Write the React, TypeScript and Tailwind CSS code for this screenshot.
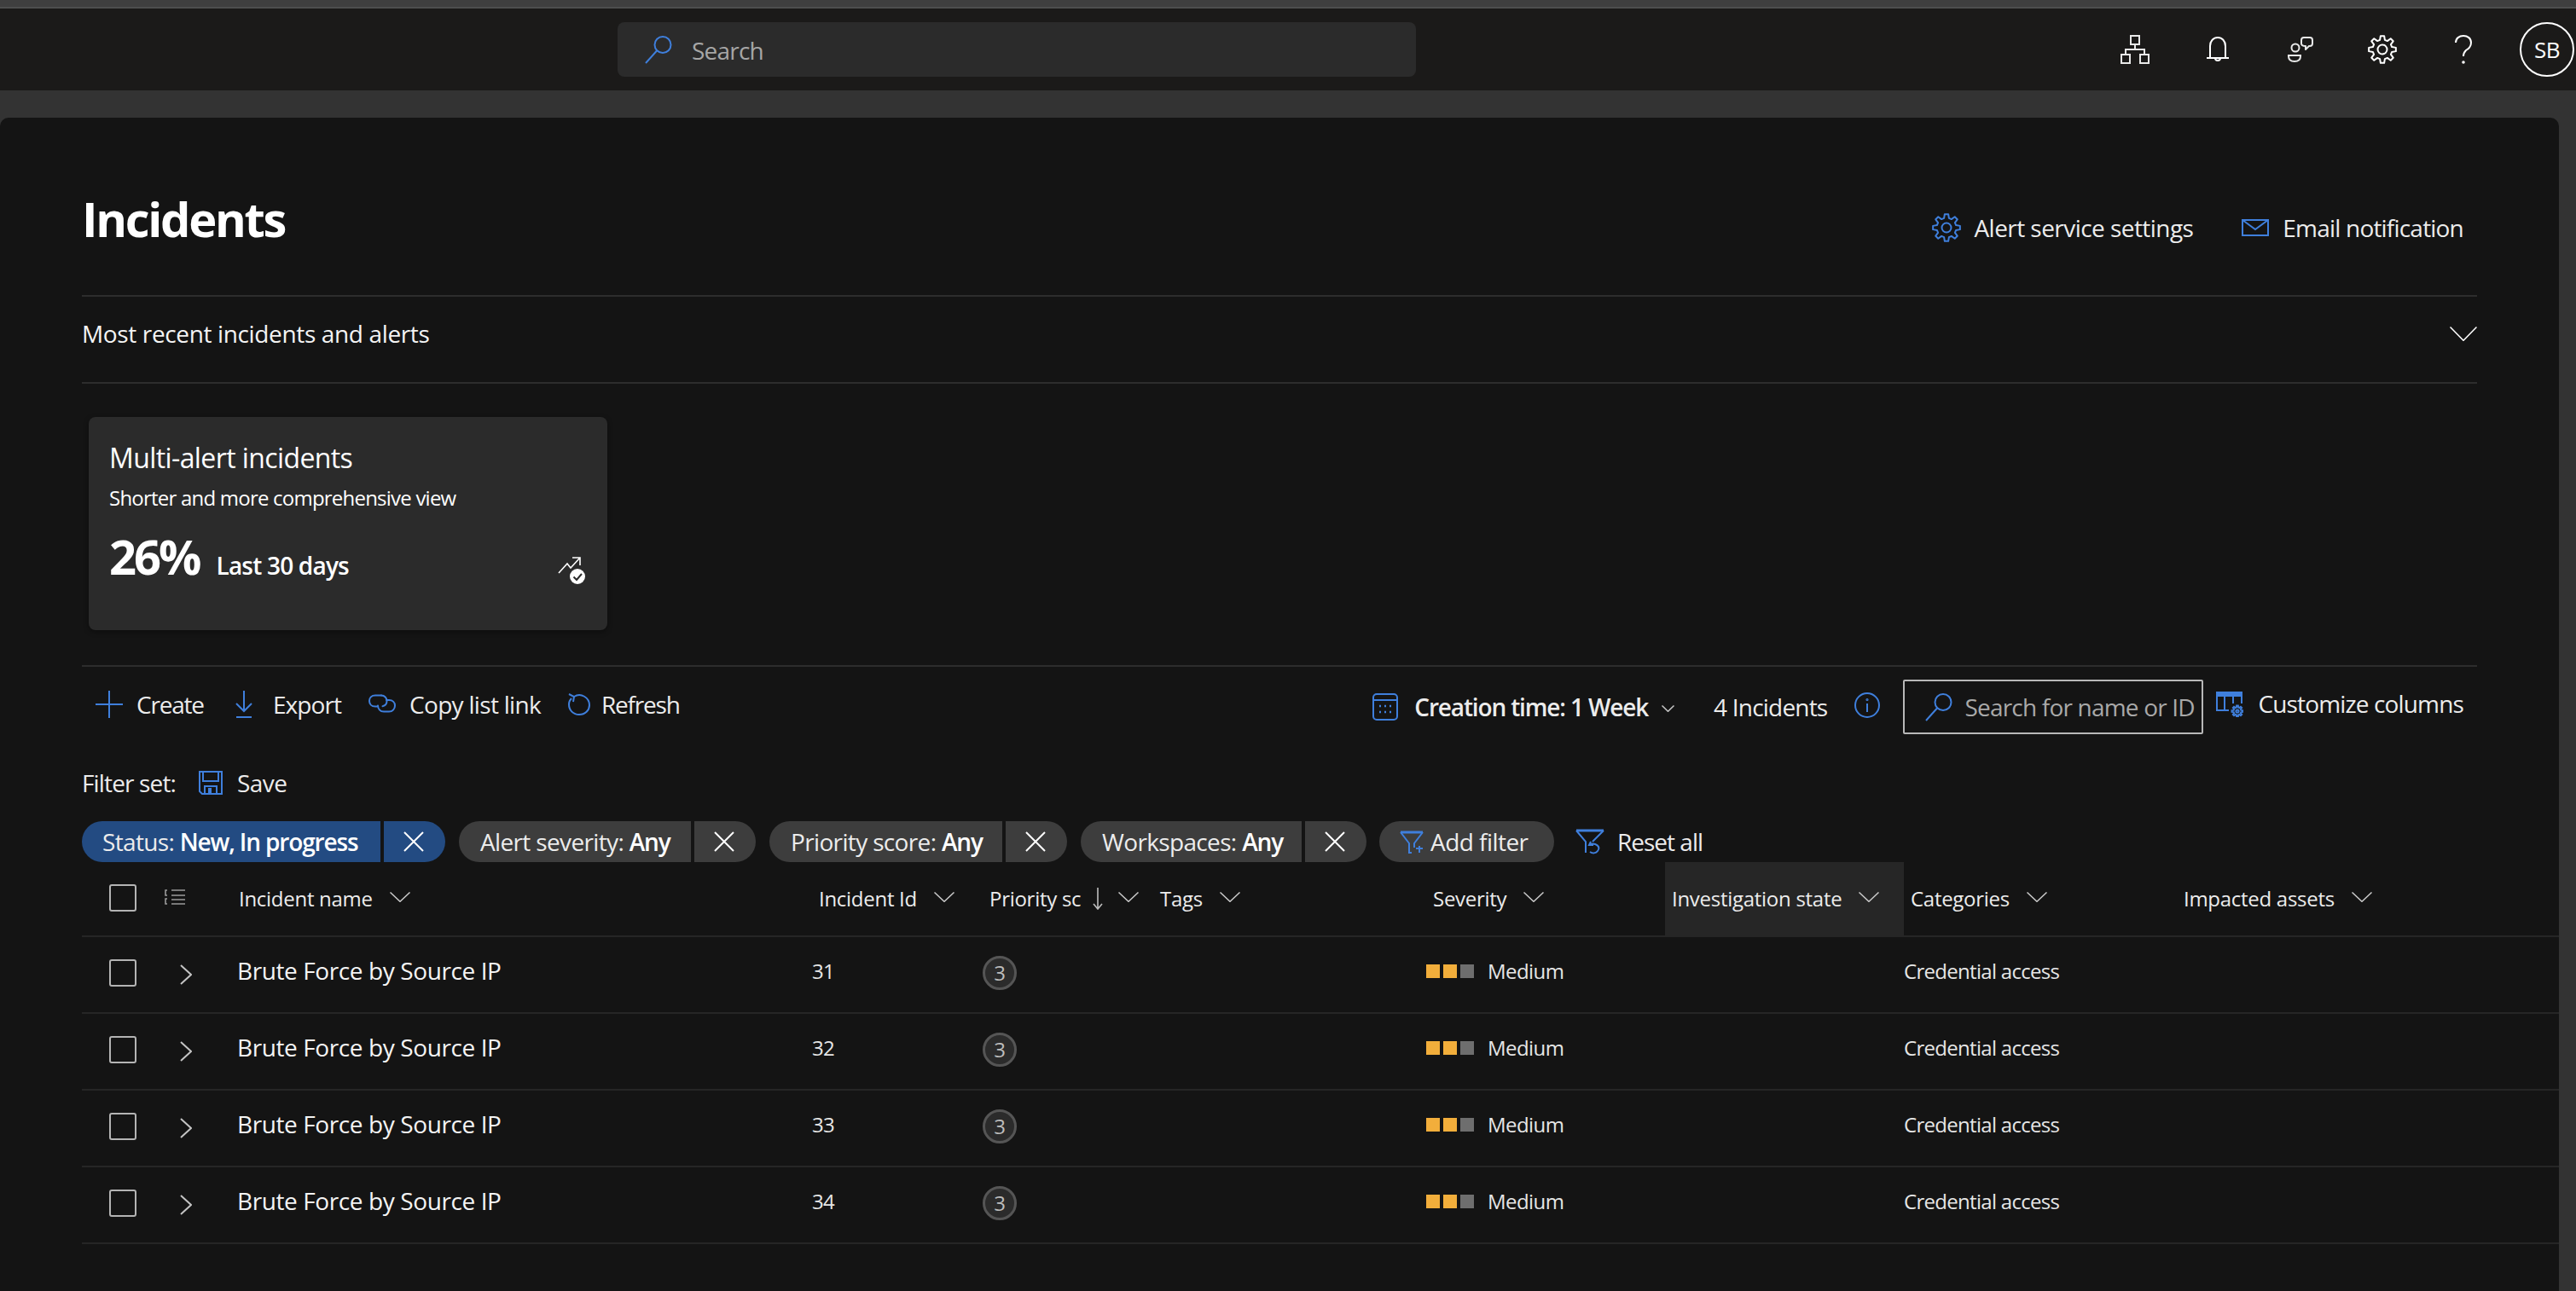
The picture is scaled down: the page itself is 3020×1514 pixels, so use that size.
import React from "react";

const BLUE = "#3f7fdc";

function gearPath(cx: number, cy: number, ro: number, ri: number, n = 8) {
  let d = "";
  const step = (Math.PI * 2) / n;
  for (let i = 0; i < n; i++) {
    const a = i * step - Math.PI / 2;
    const w = step * 0.17;
    const pts: [number, number][] = [
      [ri, a - w * 1.9],
      [ro, a - w],
      [ro, a + w],
      [ri, a + w * 1.9],
    ];
    pts.forEach(([r, t], j) => {
      const x = (cx + r * Math.cos(t)).toFixed(2);
      const y = (cy + r * Math.sin(t)).toFixed(2);
      d += (i === 0 && j === 0 ? "M" : "L") + x + " " + y + " ";
    });
  }
  return d + "Z";
}

type IP = { c?: string; w?: number; h?: number; s?: number };
const Ico = ({ w = 32, h = 32, c = BLUE, s = 2, vb, children }: IP & { vb?: string; children: React.ReactNode }) => (
  <svg width={w} height={h} viewBox={vb ?? `0 0 ${w} ${h}`} fill="none" stroke={c} strokeWidth={s} className="shrink-0 block">
    {children}
  </svg>
);

const SearchI = ({ w = 34, h = 34 }: IP) => (
  <Ico w={w} h={h} vb="0 0 34 34">
    <circle cx="22" cy="11.5" r="9.5" />
    <path d="M15 18.5 L2 33" />
  </Ico>
);
const Gear = ({ c = BLUE, size = 34, s = 2 }: { c?: string; size?: number; s?: number }) => (
  <Ico w={size} h={size} c={c} s={s} vb="0 0 34 34">
    <path d={gearPath(17, 17, 16, 11.5)} strokeLinejoin="round" />
    <circle cx="17" cy="17" r="5.5" />
  </Ico>
);
const Chev = ({ w = 24, h = 12, c = "#c8c8c8" }: IP) => (
  <Ico w={w} h={h} c={c} s={1.5}>
    <path d={`M0.5 0.5 L${w / 2} ${h - 0.7} L${w - 0.5} 0.5`} />
  </Ico>
);
const Cross = ({ c = "#fff" }: { c?: string }) => (
  <Ico w={24} h={24} c={c} s={2}>
    <path d="M1 1 L23 23 M23 1 L1 23" />
  </Ico>
);
const Network = () => (
  <Ico w={34} h={34} c="#e8e8e8" s={2}>
    <rect x="12" y="1" width="10" height="10" />
    <rect x="1" y="23" width="10" height="10" />
    <rect x="23" y="23" width="10" height="10" />
    <path d="M17 11 V17 M6 23 V17 H28 V23" />
  </Ico>
);
const Bell = () => (
  <Ico w={26} h={30} c="#fff" s={2}>
    <path d="M4 25 V11 C4 5 8 1 13 1 C18 1 22 5 22 11 V25 M0 25 H26" />
    <path d="M10 25 C10 29 16 29 16 25" />
  </Ico>
);
const Feedback = () => (
  <Ico w={30} h={30} c="#e8e8e8" s={2}>
    <circle cx="9" cy="13" r="4.5" />
    <path d="M1 22 H15 V23 C15 27 12 29 8 29 C4 29 1 27 1 23 Z" />
    <path d="M19 1 H26 C28 1 29 2 29 4 V8 C29 10 28 11 26 11 H25 L21 15 V11 C18 11 16 10 16 8 V4 C16 2 17 1 19 1 Z" strokeLinejoin="round" />
  </Ico>
);
const Help = () => (
  <Ico w={20} h={34} c="#fff" s={2}>
    <path d="M1 9 C1 4 5 1 10 1 C15 1 19 4 19 9 C19 14 16 16 13 18 C11 20 10 21 10 25" />
    <circle cx="10" cy="32" r="0.8" />
  </Ico>
);
const Mail = () => (
  <Ico w={32} h={20}>
    <rect x="1" y="1" width="30" height="18" />
    <path d="M1 1 L16 12 L31 1" />
  </Ico>
);
const Trend = () => (
  <svg width="32" height="32" viewBox="0 0 32 32" fill="none" className="shrink-0 block">
    <path d="M1 19 L11 8 L15 13 L26 1 M17 1 H26 V10" stroke="#fff" strokeWidth="1.6" />
    <circle cx="23" cy="23" r="9" fill="#fff" />
    <path d="M18.5 23.5 L22 27 L28 20" stroke="#2b2b2b" strokeWidth="2" />
  </svg>
);
const Plus = () => (
  <Ico w={32} h={32}>
    <path d="M16 0 V32 M0 16 H32" />
  </Ico>
);
const Export = () => (
  <Ico w={20} h={32}>
    <path d="M10 0 V24 M1 15 L10 24 L19 15" />
    <path d="M1 31 H19" />
  </Ico>
);
const CopyLink = () => (
  <Ico w={32} h={24} s={2}>
    <path d="M15 2.5 H8 C3.5 2.5 1 5.5 1 9 C1 12.5 3.5 15.5 8 15.5 H10" strokeLinecap="round" />
    <path d="M21 8 H24 C28.5 8 31 11 31 14.5 C31 18 28.5 21.5 24 21.5 H18 C13.5 21.5 11 18 11 14.5" strokeLinecap="round" />
    <path d="M15 2.5 C19 2.5 21.5 5.5 21.5 9 C21.5 12 19.5 14.5 16.5 15.2" strokeLinecap="round" />
  </Ico>
);
const Refresh = () => (
  <Ico w={26} h={26}>
    <path d="M7 4 C15 -1 25 5 25 14 C25 20 20 25 13 25 C6 25 1 20 1 13 C1 10 2 8 4 6" />
    <path d="M1 1 L7 4 L6 10" />
  </Ico>
);
const Calendar = () => (
  <Ico w={30} h={32}>
    <rect x="1" y="1" width="28" height="30" rx="4" />
    <path d="M1 8 H29" />
    <path d="M8 15 h2 M14 15 h2 M20 15 h2 M8 22 h2 M14 22 h2 M20 22 h2" strokeWidth="2.5" />
  </Ico>
);
const Info = () => (
  <Ico w={30} h={30}>
    <circle cx="15" cy="15" r="14" />
    <path d="M15 13 V23" />
    <circle cx="15" cy="8.5" r="0.6" />
  </Ico>
);
const Columns = () => (
  <svg width="32" height="30" viewBox="0 0 32 30" fill="none" stroke={BLUE} strokeWidth="2" className="shrink-0 block">
    <path d="M1 1 H30 V5 H1 Z" fill={BLUE} />
    <path d="M1 5 V22 H15 M10 5 V22 M20 5 V14 M30 5 V14" />
    <path d={gearPath(25, 23, 6.5, 4.5)} />
    <circle cx="25" cy="23" r="1.6" />
  </svg>
);
const Save = () => (
  <Ico w={28} h={28}>
    <path d="M1 1 H27 V27 H4 L1 24 Z" />
    <path d="M5 1 V12 H23 V1" />
    <path d="M7 27 V18 H21 V27 M12 27 V21 H14 V27" />
  </Ico>
);
const FilterPlus = () => (
  <Ico w={28} h={28}>
    <path d="M1 3 H27" strokeWidth="3" />
    <path d="M1 3 L11 16 V27 L14 27 M27 3 L17 16 V21" />
    <path d="M19 22 H27 M23 19 V27" />
  </Ico>
);
const FilterReset = () => (
  <Ico w={34} h={30}>
    <path d="M1 2 H33" strokeWidth="3" />
    <path d="M1 2 L12 15 V28 M33 2 L20 15" />
    <path d="M18 15 L16 19 L21 19 M17 18 C24 16 30 21 26 26 C24 29 20 29 17 27" />
  </Ico>
);
const ListI = () => (
  <Ico w={24} h={18} c="#9a9a9a" s={1.6}>
    <path d="M8 1 H24 M8 7 H24 M8 12 H24 M8 17 H24" />
    <path d="M3 1 H1 V7 H3 M3 11 H1 V17 H3" />
  </Ico>
);
const RowChev = () => (
  <Ico w={14} h={24} c="#c4c4c4" s={2}>
    <path d="M1 1 L13 12 L1 23" />
  </Ico>
);
const Check = () => <div className="w-[32px] h-[32px] rounded-[3px] border-2 border-[#b4b4b4]" />;

const GRID = "grid grid-cols-[88px_88px_680px_200px_200px_320px_280px_280px_320px_448px]";

const Chip = ({ label, value, l, r, blue }: { label: string; value: string; l: string; r: string; blue?: boolean }) => {
  const bg = blue ? "bg-[#234b82]" : "bg-[#3d3d3d]";
  return (
    <div className="flex gap-[4px] h-[48px]">
      <div className={`${bg} ${l} rounded-l-[24px] flex items-center ${blue ? "pl-[24px]" : "pl-[25px]"} text-[28px] tracking-[-0.65px] text-[#ececec] whitespace-nowrap`}>
        {label}&nbsp;<span className="font-semibold tracking-[-1.15px] text-white">{value}</span>
      </div>
      <div className={`${bg} ${r} rounded-r-[24px] flex items-center justify-center pr-[2px]`}>
        <Cross />
      </div>
    </div>
  );
};

const Head = ({ t, cls = "" }: { t: string; cls?: string }) => (
  <div className={`flex items-center pl-[8px] h-full ${cls}`}>
    <span className="text-[24px] font-medium tracking-[-0.28px] text-[#ececec] whitespace-nowrap">{t}</span>
    <span className="ml-[20px] -mt-[4px]"><Chev /></span>
  </div>
);

const Row = ({ id }: { id: string }) => (
  <div className={`${GRID} h-[90px] border-b-2 border-[#262626] items-center pb-[8px] ml-[96px] text-[#e6e6e6]`}>
    <div className="pl-[32px] pt-[4px]"><Check /></div>
    <div className="pl-[27px] pt-[8px]"><RowChev /></div>
    <div className="pl-[6px] -mt-[2px] text-[28px] font-medium tracking-[-0.4px] text-[#f4f4f4] whitespace-nowrap">Brute Force by Source IP</div>
    <div className="text-[24px] tracking-[-0.6px]">{id}</div>
    <div className="pt-[4px]">
      <div className="w-[40px] h-[40px] rounded-full border-[3px] border-[#555] bg-[#2b2b2b] flex items-center justify-center text-[24px] text-[#bdbdbd]">3</div>
    </div>
    <div />
    <div className="flex items-center">
      <div className="w-[16px] h-[16px] bg-[#f2ae3b]" />
      <div className="w-[16px] h-[16px] bg-[#f2ae3b] ml-[4px]" />
      <div className="w-[16px] h-[16px] bg-[#6e6e6e] ml-[4px]" />
      <span className="ml-[16px] text-[24px] tracking-[-0.55px]">Medium</span>
    </div>
    <div />
    <div className="text-[24px] tracking-[-0.7px] whitespace-nowrap">Credential access</div>
    <div />
  </div>
);

export default function App() {
  return (
    <div className="w-[3020px] h-[1514px] overflow-hidden bg-[#333333] flex flex-col font-['Open_Sans','Noto_Sans',sans-serif] text-white">
      <div className="h-[8px] bg-[#3f3f3f]" />
      <div className="h-[2px] bg-[#4e4e4e]" />
      <header className="h-[96px] bg-[#1b1a19] flex items-center pl-[724px]">
        <div className="w-[936px] h-[64px] bg-[#2b2b2b] rounded-[8px] flex items-center pl-[31px]">
          <SearchI w={34} h={34} />
          <span className="ml-[22px] mt-[2px] text-[28px] tracking-[-0.8px] text-[#a6a6a6]">Search</span>
        </div>
        <div className="ml-[826px]"><Network /></div>
        <div className="ml-[67px]"><Bell /></div>
        <div className="ml-[69px]"><Feedback /></div>
        <div className="ml-[64px]"><Gear c="#fff" /></div>
        <div className="ml-[68px]"><Help /></div>
        <div className="ml-[56px] w-[64px] h-[64px] rounded-full border-2 border-white flex items-center justify-center text-[26px] font-medium tracking-[-0.5px]">SB</div>
      </header>
      <main className="mt-[32px] w-[3000px] flex-1 bg-[#141414] rounded-t-[10px] overflow-hidden">
        <div className="ml-[96px] w-[2808px]">
          <div className="h-[210px] border-b-2 border-[#2d2d2d] flex pt-[62px] pr-[16px]">
            <h1 className="text-[56px] leading-[112px] h-[112px] font-bold tracking-[-2.3px]">Incidents</h1>
            <div className="ml-auto flex items-center h-[70px] mt-[32px] text-[28px] tracking-[-0.55px] text-[#ececec]">
              <Gear />
              <span className="ml-[15px]">Alert service settings</span>
              <span className="ml-[57px]"><Mail /></span>
              <span className="ml-[16px] tracking-[-0.8px]">Email notification</span>
            </div>
          </div>
          <div className="h-[102px] border-b-2 border-[#2d2d2d] flex items-center justify-between pb-[14px]">
            <span className="text-[28px] font-medium tracking-[-0.36px] text-[#f4f4f4]">Most recent incidents and alerts</span>
            <Chev w={32} h={17} c="#fff" />
          </div>
          <div className="h-[332px] border-b-2 border-[#2d2d2d] pt-[39px] pl-[8px]">
            <div className="w-[608px] h-[250px] bg-[#2b2b2b] rounded-[8px] pl-[24px] pr-[26px] pt-[26px] shadow-[0_2px_6px_rgba(0,0,0,0.4)]">
              <div className="text-[32px] leading-[44px] tracking-[-0.6px]">Multi-alert incidents</div>
              <div className="text-[24px] leading-[36px] mt-[7px] tracking-[-0.78px]">Shorter and more comprehensive view</div>
              <div className="flex items-center mt-[14px]">
                <span className="text-[56px] leading-[72px] font-bold tracking-[-3px]">26%</span>
                <span className="ml-[20px] mt-[22px] text-[28px] font-semibold tracking-[-0.8px]">Last 30 days</span>
                <span className="ml-auto mt-[34px]"><Trend /></span>
              </div>
            </div>
          </div>
          <div className="h-[88px] flex items-center text-[28px] tracking-[-0.55px] text-[#ececec]">
            <div className="ml-[16px]"><Plus /></div>
            <span className="ml-[16px] tracking-[-1.2px]">Create</span>
            <div className="ml-[37px]"><Export /></div>
            <span className="ml-[24px] tracking-[-0.9px]">Export</span>
            <div className="ml-[32px] -mt-[2px]"><CopyLink /></div>
            <span className="ml-[16px] tracking-[-0.7px]">Copy list link</span>
            <div className="ml-[32px]"><Refresh /></div>
            <span className="ml-[13px] tracking-[-1.2px]">Refresh</span>
            <div className="ml-auto flex items-center mt-[6px]">
              <Calendar />
              <span className="ml-[19px] font-semibold tracking-[-1.15px]">Creation time: 1 Week</span>
              <span className="ml-[16px] mt-[4px]"><Chev w={15} h={8} /></span>
              <span className="ml-[46px] tracking-[-0.8px]">4 Incidents</span>
              <span className="ml-[32px] -mt-[4px]"><Info /></span>
              <div className="ml-[27px] w-[352px] h-[64px] border-2 border-[#b8b8b8] rounded-[2px] flex items-center pl-[23px]">
                <SearchI />
                <span className="ml-[13px] text-[#a9a9a9] whitespace-nowrap tracking-[-0.8px]">Search for name or ID</span>
              </div>
            </div>
            <div className="ml-[15px] -mt-[2px] flex items-center pr-[16px]">
              <span className="mt-[2px]"><Columns /></span>
              <span className="ml-[17px] tracking-[-0.85px]">Customize columns</span>
            </div>
          </div>
          <div className="h-[93px] flex items-center pt-[3px] text-[28px] tracking-[-0.55px] text-[#ececec]">
            <span className="tracking-[-0.85px]">Filter set:</span>
            <div className="ml-[27px]"><Save /></div>
            <span className="ml-[17px]">Save</span>
          </div>
          <div className="flex gap-[16px] items-center h-[48px]">
            <Chip label="Status:" value="New, In progress" l="w-[350px]" r="w-[72px]" blue />
            <Chip label="Alert severity:" value="Any" l="w-[272px]" r="w-[72px]" />
            <Chip label="Priority score:" value="Any" l="w-[273px]" r="w-[72px]" />
            <Chip label="Workspaces:" value="Any" l="w-[259px]" r="w-[72px]" />
            <div className="w-[205px] h-[48px] bg-[#3d3d3d] rounded-[24px] flex items-center pl-[24px] -ml-[1px] text-[28px] tracking-[-0.55px] text-[#ececec]">
              <FilterPlus />
              <span className="ml-[8px]">Add filter</span>
            </div>
            <div className="flex items-center ml-[9px] text-[28px] tracking-[-1px] text-[#ececec]">
              <FilterReset />
              <span className="ml-[15px]">Reset all</span>
            </div>
          </div>
        </div>
        <div className={`${GRID} h-[88px] border-b-2 border-[#262626] ml-[96px] items-center`}>
          <div className="pl-[32px] -mt-[2px]"><Check /></div>
          <div className="pl-[9px] -mt-[4px]"><ListI /></div>
          <Head t="Incident name" />
          <Head t="Incident Id" />
          <div className="flex items-center pl-[8px] h-full">
            <span className="text-[24px] font-medium tracking-[-0.28px] text-[#ececec] whitespace-nowrap">Priority sc</span>
            <span className="ml-[14px]">
              <Ico w={12} h={26} c="#bdbdbd" s={1.6}><path d="M6 0 V25 M1 19 L6 25 L11 19" /></Ico>
            </span>
            <span className="ml-[18px] -mt-[4px]"><Chev /></span>
          </div>
          <Head t="Tags" />
          <Head t="Severity" />
          <Head t="Investigation state" cls="bg-[#262626]" />
          <Head t="Categories" />
          <Head t="Impacted assets" />
        </div>
        <Row id="31" />
        <Row id="32" />
        <Row id="33" />
        <Row id="34" />
      </main>
    </div>
  );
}
